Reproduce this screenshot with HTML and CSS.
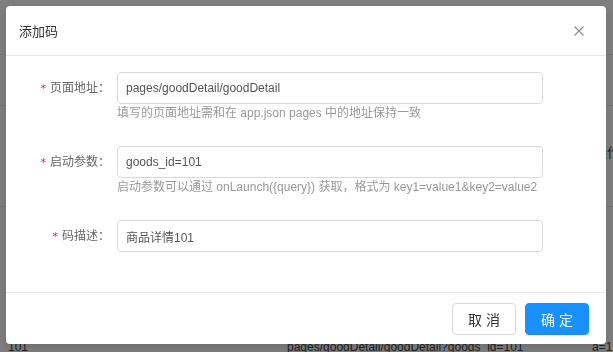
FILE: index.html
```html
<!DOCTYPE html>
<html lang="zh-CN">

<head>
    <meta charset="UTF-8">
    <meta name="viewport" content="width=device-width, initial-scale=1.0">
    <title>添加码</title>
    <link rel="stylesheet" href="styles.css">
</head>

<body>

    <div id="page">
        <div class="page-row page-head">
            <span class="cell cell-first">条件</span>
        </div>
        <div class="page-row">
            <span class="cell cell-first">素材</span>
        </div>
        <div class="page-row page-mid">
            <span class="cell cell-first"></span>
            <span class="cell cell-right">操作</span>
        </div>
        <div class="page-row page-last">
            <span class="cell cell-first">101</span>
            <span class="cell cell-path">pages/goodDetail/goodDetail?goods_id=101</span>
            <span class="cell cell-end">a=1</span>
        </div>
    </div>

    <div id="mask"></div>

    <div id="dialog">
        <div class="dialog-header">
            <span class="dialog-title">添加码</span>
            <button class="dialog-close" aria-label="关闭">
                <svg width="10" height="10" viewBox="0 0 10 10">
                    <path d="M0.5 0.5 L9.5 9.5 M9.5 0.5 L0.5 9.5" stroke="#8c8c8c" stroke-width="1.1" fill="none" />
                </svg>
            </button>
        </div>

        <div class="dialog-body">
            <div class="form-row">
                <label class="form-label"><span class="required">*</span>页面地址：</label>
                <div class="form-field">
                    <input class="form-input" type="text" value="pages/goodDetail/goodDetail">
                    <div class="form-help">填写的页面地址需和在 app.json pages 中的地址保持一致</div>
                </div>
            </div>
            <div class="form-row">
                <label class="form-label"><span class="required">*</span>启动参数：</label>
                <div class="form-field">
                    <input class="form-input" type="text" value="goods_id=101">
                    <div class="form-help">启动参数可以通过 onLaunch({query}) 获取，格式为 key1=value1&amp;key2=value2</div>
                </div>
            </div>
            <div class="form-row">
                <label class="form-label"><span class="required">*</span>码描述：</label>
                <div class="form-field">
                    <input class="form-input" type="text" value="商品详情101">
                </div>
            </div>
        </div>

        <div class="dialog-footer">
            <button class="btn btn-default">取 消</button>
            <button class="btn btn-primary">确 定</button>
        </div>
    </div>

</body>

</html>
```

FILE: styles.css
```css
body {
    margin: 0;
    padding: 0;
    width: 613px;
    height: 352px;
    overflow: hidden;
    background-color: #fff;
    font-family: "Liberation Sans", "Noto Sans CJK SC", sans-serif;
    font-size: 12px;
    color: #333;
}

/* page behind the mask */
#page {
    margin-left: -16px;
    width: 640px;
}

.page-row {
    display: flex;
    align-items: center;
    height: 50px;
    border-bottom: 1px solid #e8e8e8;
    font-size: 13px;
    color: #444;
}

.page-head {
    height: 54px;
    align-items: flex-end;
}

.page-mid {
    height: 64px;
    padding-top: 36px;
    align-items: flex-start;
}

.page-last {
    margin-top: 133px;
    height: 18px;
    align-items: flex-start;
    border-bottom: none;
    font-size: 12px;
}

.cell-first {
    width: 279px;
    padding-left: 24px;
}

.cell-path {
    width: 305px;
}

.cell-right {
    margin-left: auto;
    margin-right: 4px;
}

#mask {
    position: fixed;
    inset: 0;
    background-color: rgba(0, 0, 0, 0.5);
}

/* dialog */
#dialog {
    position: fixed;
    top: 6px;
    left: 6px;
    width: 600px;
    height: 338px;
    background-color: #fff;
    border-radius: 4px;
    display: flex;
    flex-direction: column;
    box-shadow: 0 4px 12px rgba(0, 0, 0, 0.15);
}

.dialog-header {
    display: flex;
    align-items: center;
    justify-content: space-between;
    height: 49px;
    padding: 0 16px 0 13px;
    border-bottom: 1px solid #e8e8e8;
}

.dialog-title {
    font-size: 13px;
    color: #333;
}

.dialog-close {
    display: flex;
    align-items: center;
    justify-content: center;
    width: 20px;
    height: 20px;
    padding: 0;
    margin-right: 1px;
    border: none;
    background: none;
    cursor: pointer;
}

.dialog-body {
    flex: 1;
    padding-top: 16px;
}

.form-row {
    display: flex;
    align-items: flex-start;
    margin-bottom: 24px;
}

.form-label {
    width: 104px;
    flex-shrink: 0;
    height: 32px;
    line-height: 32px;
    padding-right: 7px;
    text-align: right;
    color: #666;
    white-space: nowrap;
}

.required {
    color: #f5222d;
    margin-right: 4px;
    font-family: "DejaVu Sans", sans-serif;
    font-size: 11px;
}

.form-field {
    width: 426px;
}

.form-input {
    box-sizing: border-box;
    display: block;
    width: 100%;
    height: 32px;
    padding: 0 8px;
    border: 1px solid #d9d9d9;
    border-radius: 4px;
    font-family: inherit;
    font-size: 12px;
    color: #555;
    outline: none;
}

.form-help {
    line-height: 18px;
    color: #999;
    white-space: nowrap;
}

.dialog-footer {
    display: flex;
    justify-content: flex-end;
    gap: 9px;
    padding: 10px 17px 9px;
    border-top: 1px solid #e8e8e8;
}

.btn {
    width: 64px;
    height: 32px;
    border-radius: 4px;
    font-family: inherit;
    font-size: 14px;
    cursor: pointer;
}

.btn-default {
    background-color: #fff;
    border: 1px solid #d9d9d9;
    color: #333;
}

.btn-primary {
    background-color: #1890ff;
    border: 1px solid #1890ff;
    color: #fff;
}
```
